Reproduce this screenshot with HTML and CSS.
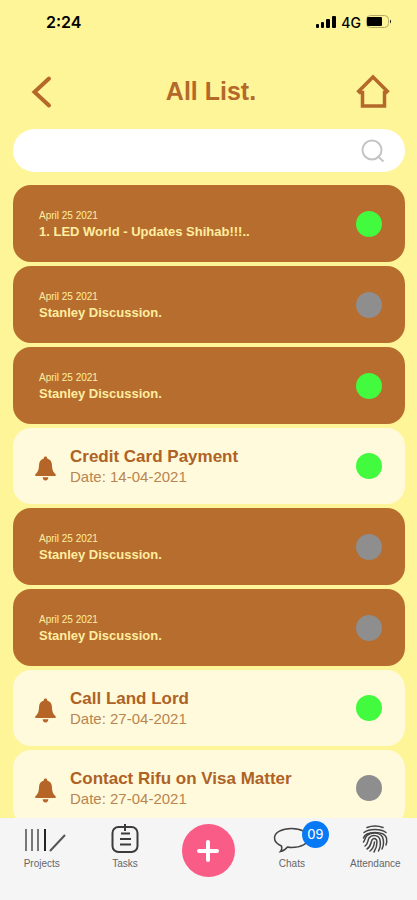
FILE: index.html
```html
<!DOCTYPE html>
<html lang="en">

<head>
    <meta charset="UTF-8">
    <meta name="viewport" content="width=device-width, initial-scale=1.0">
    <title>All List</title>
    <link rel="stylesheet" href="styles.css">
</head>

<body>
    <!-- shared icons -->
    <svg class="sprite" aria-hidden="true">
        <symbol id="bell" viewBox="0 0 20 24">
            <path d="M10 .5a1.6 1.6 0 0 1 1.6 1.8c3 .8 4.4 3 4.6 6 .2 4 .5 6.4 3.3 9 .8.8.4 2-.7 2H1.200c-1.100 0-1.500-1.200-.7-2 2.800-2.600 3.100-5 3.300-9 .2-3 1.600-5.200 4.600-6A1.600 1.600 0 0 1 10 .5z" />
            <path d="M7.300 20.500h5.400a2.700 3 0 0 1-5.400 0z" />
        </symbol>
    </svg>

    <div class="status-bar">
        <span class="clock">2:24</span>
        <div class="signals">
            <svg width="20" height="12" viewBox="0 0 20 12" aria-hidden="true">
                <rect x="0" y="8" width="3" height="4" rx="1" />
                <rect x="5" y="6" width="3" height="6" rx="1" />
                <rect x="10" y="3" width="4" height="9" rx="1" />
                <rect x="16" y="0" width="4" height="12" rx="1" />
            </svg>
            <span class="network">4G</span>
            <svg width="26" height="14" viewBox="0 0 26 14" aria-hidden="true">
                <rect x="0.5" y="0.5" width="22" height="12" rx="4" fill="none" stroke="#b5ab69" />
                <rect x="1" y="2" width="15" height="9" rx="1" />
                <path d="M24 4.500v4q2-2 0-4z" />
            </svg>
        </div>
    </div>

    <header class="header">
        <button type="button" class="icon-button" aria-label="Back">
            <svg width="20" height="32" viewBox="0 0 20 32"><path d="M17 2.500L2.500 16 17 29.500" fill="none" stroke="#b4692a" stroke-width="4" stroke-linecap="round" /></svg>
        </button>
        <h1 class="title">All List.</h1>
        <button type="button" class="icon-button" aria-label="Home">
            <svg width="34" height="34" viewBox="0 0 34 34"><path d="M1.500 17.500L17 2l15.500 15.500M3 17.500h3.500V31h22V17.500H31" fill="none" stroke="#b4692a" stroke-width="3.500" /></svg>
        </button>
    </header>

    <form class="search-form">
        <input type="search" class="search-input" aria-label="Search">
        <button type="button" class="icon-button" aria-label="Search list">
            <svg width="24" height="24" viewBox="0 0 24 24"><circle cx="11" cy="11" r="9.500" fill="none" stroke="#c4c4c4" stroke-width="2" /><path d="M16.500 17l6 5.500" stroke="#c4c4c4" stroke-width="2" /></svg>
        </button>
    </form>

    <ul class="list">
        <li class="card">
            <div class="card-text">
                <p class="card-date">April 25 2021</p>
                <h2 class="card-title">1. LED World - Updates Shihab!!!..</h2>
            </div>
            <span class="dot active"></span>
        </li>
        <li class="card">
            <div class="card-text">
                <p class="card-date">April 25 2021</p>
                <h2 class="card-title">Stanley Discussion.</h2>
            </div>
            <span class="dot"></span>
        </li>
        <li class="card">
            <div class="card-text">
                <p class="card-date">April 25 2021</p>
                <h2 class="card-title">Stanley Discussion.</h2>
            </div>
            <span class="dot active"></span>
        </li>
        <li class="card reminder">
            <svg class="bell"><use href="#bell" /></svg>
            <div class="card-text">
                <h2 class="card-title">Credit Card Payment</h2>
                <p class="card-date">Date: 14-04-2021</p>
            </div>
            <span class="dot active"></span>
        </li>
        <li class="card">
            <div class="card-text">
                <p class="card-date">April 25 2021</p>
                <h2 class="card-title">Stanley Discussion.</h2>
            </div>
            <span class="dot"></span>
        </li>
        <li class="card">
            <div class="card-text">
                <p class="card-date">April 25 2021</p>
                <h2 class="card-title">Stanley Discussion.</h2>
            </div>
            <span class="dot"></span>
        </li>
        <li class="card reminder">
            <svg class="bell"><use href="#bell" /></svg>
            <div class="card-text">
                <h2 class="card-title">Call Land Lord</h2>
                <p class="card-date">Date: 27-04-2021</p>
            </div>
            <span class="dot active"></span>
        </li>
        <li class="card reminder">
            <svg class="bell"><use href="#bell" /></svg>
            <div class="card-text">
                <h2 class="card-title">Contact Rifu on Visa Matter</h2>
                <p class="card-date">Date: 27-04-2021</p>
            </div>
            <span class="dot"></span>
        </li>
    </ul>

    <nav class="tab-bar">
        <a class="tab" href="#projects">
            <svg width="36" height="30" viewBox="0 0 36 30" fill="none">
                <path d="M2 5v22M8 5v22M14 5v22" stroke="#777" stroke-width="2" />
                <path d="M21 5v22" stroke="#222" stroke-width="2" />
                <path d="M26 27L41 11" stroke="#555" stroke-width="2" />
            </svg>
            Projects
        </a>
        <a class="tab" href="#tasks">
            <svg width="28" height="30" viewBox="0 0 28 30" fill="none" stroke="#3c3c3c" stroke-width="2">
                <rect x="1.500" y="3" width="25" height="25" rx="6" />
                <path d="M14 0v7M10 9.500h9M9 15h11M9 20.500h11" />
            </svg>
            Tasks
        </a>
        <button type="button" class="add-button" aria-label="Add">
            <svg width="22" height="22" viewBox="0 0 22 22"><path d="M11 2v18M2 11h18" stroke="#fff" stroke-width="4" stroke-linecap="round" /></svg>
        </button>
        <a class="tab" href="#chats">
            <span class="chat-icon">
                <svg width="36" height="30" viewBox="0 0 36 30" fill="none" stroke="#444" stroke-width="1.500">
                    <path d="M7.500 22C3 20 .5 17 .5 14 .5 8.500 8 4.500 17.500 4.500s17 4 17 9.500-7.500 9.500-17 9.500q-2 0-4-.5c-2 2.500-4 4-7 4.500 1.500-1.500 1.500-3.500 1-5.500z" />
                </svg>
                <span class="badge">09</span>
            </span>
            Chats
        </a>
        <a class="tab" href="#attendance">
            <svg width="26" height="30" viewBox="0 0 26 30" fill="none" stroke="#444" stroke-width="1.500" stroke-linecap="round">
                <path d="M5 3.500Q13 .5 21 3.500M2 8.500Q6 5.500 13 5.500t11 3" />
                <path d="M1.500 14C3.500 6.500 22.500 6.500 24.500 14c.5 3 .5 5-.5 7" />
                <path d="M1.500 18c1.500-2 1.500-4 3-6 4-4 13-4 16 1 1.500 4 1.500 8-.5 12" />
                <path d="M3 22c3-2 2.500-5 4-8 3-4 10-3 11 2s0 8-1.500 11" />
                <path d="M5 25c4-2 3.500-6 5-9 2-3 5-1 5 2 0 4-1 7-3 10" />
                <path d="M8 27c3-2 4-5 4.500-9" />
            </svg>
            Attendance
        </a>
    </nav>
</body>

</html>
```
FILE: styles.css
```css
* {
    box-sizing: border-box;
}

body {
    margin: 0;
    height: 100vh;
    display: flex;
    flex-direction: column;
    overflow: hidden;
    background-color: #fef498;
    font-family: "Liberation Sans", Arial, sans-serif;
}

h1, h2, p, ul {
    margin: 0;
    padding: 0;
}

.sprite {
    display: none;
}

svg {
    display: block;
    overflow: visible;
}

.status-bar {
    flex: none;
    height: 44px;
    padding: 0 25px 0 46px;
    display: flex;
    justify-content: space-between;
    align-items: center;
}

.clock {
    font-family: Inter, sans-serif;
    font-size: 16px;
    font-weight: 600;
}

.signals {
    display: flex;
    align-items: center;
    gap: 5px;
}

.network {
    font-family: Inter, sans-serif;
    font-size: 14px;
    font-weight: 500;
}

.header {
    flex: none;
    height: 85px;
    padding: 10px 27px 0 32px;
    display: grid;
    grid-template-columns: 34px 1fr 34px;
    align-items: center;
    text-align: center;
}

.icon-button {
    padding: 0;
    border: none;
    background: transparent;
    cursor: pointer;
}

.title {
    font-size: 25px;
    font-weight: bold;
    color: #b4692a;
}

.search-form {
    flex: none;
    height: 43px;
    margin: 0 12px 13px 13px;
    padding: 0 20px;
    display: flex;
    align-items: center;
    background-color: white;
    border-radius: 22px;
}

.search-input {
    flex: 1;
    min-width: 0;
    font-size: 16px;
    border: none;
    background: transparent;
    outline: none;
}

.list {
    flex: 1;
    min-height: 0;
    margin: 0 12px 0 13px;
    overflow: hidden;
    display: flex;
    flex-direction: column;
    gap: 4px;
    list-style: none;
}

.card {
    flex: none;
    min-height: 77px;
    padding: 0 23px 0 26px;
    display: flex;
    align-items: center;
    background-color: #b66d2e;
    color: #ffeda0;
    border-radius: 18px;
}

.card-text {
    flex: 1;
}

.card-date {
    font-size: 10px;
    line-height: 15px;
}

.card-title {
    font-size: 13px;
    line-height: 17px;
}

.reminder {
    min-height: 76px;
    padding-left: 22px;
    background-color: #fffadb;
    color: #ae6225;
}

.reminder .card-title {
    font-size: 17px;
    line-height: 21px;
}

.reminder .card-date {
    font-size: 15px;
    line-height: 20px;
    color: #b98550;
}

.bell {
    width: 21px;
    height: 25px;
    margin: 4px 14px 0 0;
    fill: #b66528;
}

.dot {
    width: 26px;
    height: 26px;
    border-radius: 50%;
    background-color: #8e8e8e;
}

.dot.active {
    background-color: #42fa3e;
}

.tab-bar {
    flex: none;
    height: 82px;
    padding-top: 6px;
    display: grid;
    grid-template-columns: repeat(5, 1fr);
    justify-items: center;
    align-items: start;
    background-color: #f5f5f5;
}

.tab {
    display: flex;
    flex-direction: column;
    align-items: center;
    gap: 4px;
    font-size: 10px;
    line-height: 12px;
    color: #666;
    text-decoration: none;
}

.add-button {
    width: 53px;
    height: 53px;
    display: grid;
    place-items: center;
    padding: 0;
    border: none;
    border-radius: 50%;
    background-color: #f95c86;
    cursor: pointer;
}

.chat-icon {
    position: relative;
}

.badge {
    position: absolute;
    top: -3px;
    right: -19px;
    width: 27px;
    height: 27px;
    border-radius: 50%;
    background-color: #0879f5;
    color: white;
    font-size: 14px;
    line-height: 27px;
    text-align: center;
}
```
